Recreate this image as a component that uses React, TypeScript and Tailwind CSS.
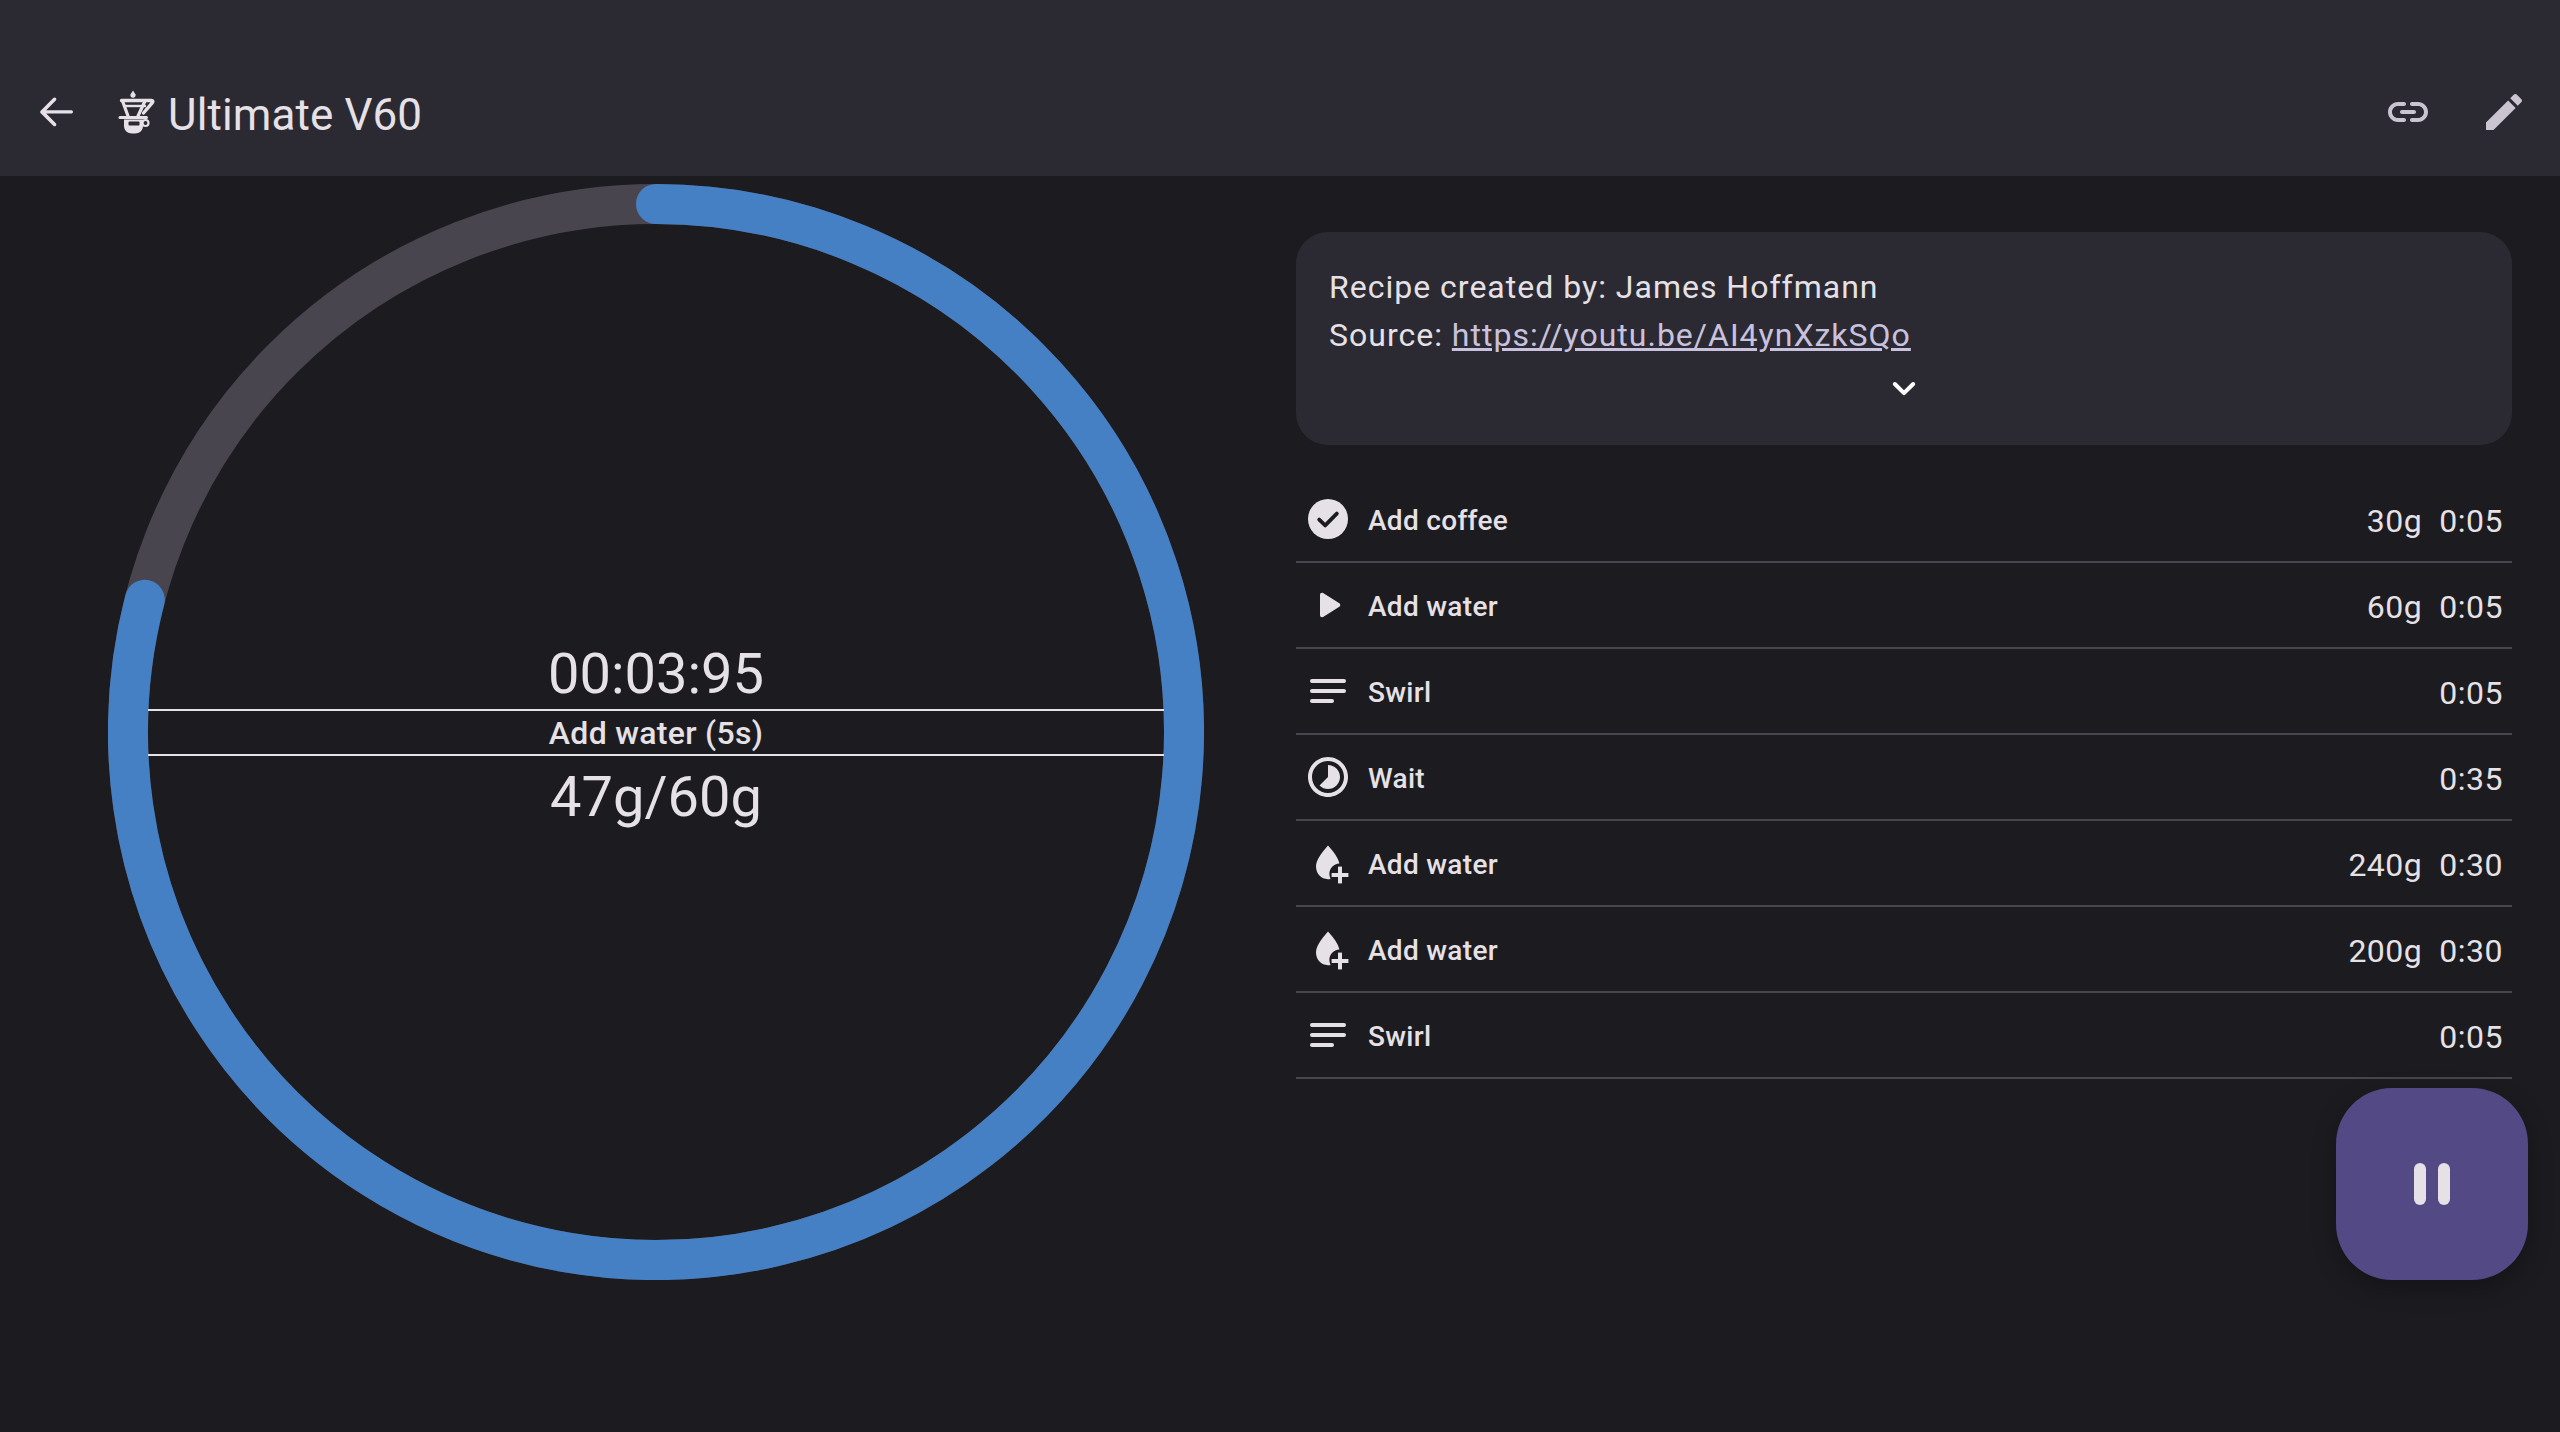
const TXT = "#e6e1e6";
const font = { fontFamily: "Roboto, sans-serif" };

function I({ d, size = 48, color = TXT }: { d: string; size?: number; color?: string }) {
  return (
    <svg width={size} height={size} viewBox="0 0 24 24" fill={color} className="shrink-0">
      <path d={d} />
    </svg>
  );
}

const back = "M19.6 11.1H7.1l4.8-4.8c.35-.35.35-.92 0-1.27-.35-.35-.9-.35-1.25 0l-6.3 6.3c-.35.35-.35.92 0 1.27l6.3 6.3c.35.35.9.35 1.25 0 .35-.35.35-.92 0-1.27l-4.8-4.83h12.5c.5 0 .9-.4.9-.9s-.4-.8-.9-.8z";
const link = "M17 7h-3c-.55 0-1 .45-1 1s.45 1 1 1h3c1.65 0 3 1.35 3 3s-1.35 3-3 3h-3c-.55 0-1 .45-1 1s.45 1 1 1h3c2.76 0 5-2.24 5-5s-2.24-5-5-5zm-9 5c0 .55.45 1 1 1h6c.55 0 1-.45 1-1s-.45-1-1-1H9c-.55 0-1 .45-1 1zm2 3H7c-1.65 0-3-1.35-3-3s1.35-3 3-3h3c.55 0 1-.45 1-1s-.45-1-1-1H7c-2.76 0-5 2.24-5 5s2.24 5 5 5h3c.55 0 1-.45 1-1s-.45-1-1-1z";
const edit = "M3 17.25V21h3.75L17.81 9.94l-3.75-3.75L3 17.25zM20.71 7.04c.39-.39.39-1.02 0-1.41l-2.34-2.34c-.39-.39-1.02-.39-1.41 0l-1.83 1.83 3.75 3.75 1.83-1.83z";
const chevron = "M15.88 9.29 12 13.17 8.12 9.29c-.39-.39-1.02-.39-1.41 0-.39.39-.39 1.02 0 1.41l4.59 4.59c.39.39 1.02.39 1.41 0l4.59-4.59c.39-.39.39-1.02 0-1.41-.39-.38-1.03-.39-1.42 0z";
const play = "M8 6.82v10.36c0 .79.87 1.27 1.54.84l8.14-5.18c.62-.39.62-1.29 0-1.69L9.54 5.98C8.87 5.55 8 6.03 8 6.82z";
const timelapse = "M16.24 7.76C15.07 6.59 13.54 6 12 6v6l-4.24 4.24c2.34 2.34 6.14 2.34 8.49 0 2.34-2.34 2.34-6.14-.01-8.48zM12 2C6.48 2 2 6.48 2 12s4.48 10 10 10 10-4.48 10-10S17.52 2 12 2zm0 18c-4.42 0-8-3.58-8-8s3.58-8 8-8 8 3.58 8 8-3.58 8-8 8z";

function Check() {
  return (
    <svg width={48} height={48} viewBox="0 0 24 24" className="shrink-0">
      <circle cx="12" cy="12" r="10" fill={TXT} />
      <path d="M7.6 12.3l3 2.9 5.8-5.9" fill="none" stroke="#1c1b1f" strokeWidth="1.9" strokeLinecap="round" strokeLinejoin="round" />
    </svg>
  );
}

function Notes() {
  return (
    <svg width={48} height={48} viewBox="0 0 24 24" fill={TXT} className="shrink-0">
      <rect x="3" y="6" width="18" height="2" rx="1" />
      <rect x="3" y="11" width="18" height="2" rx="1" />
      <rect x="3" y="16" width="12" height="2" rx="1" />
    </svg>
  );
}

function WaterPlus() {
  return (
    <svg width={48} height={48} viewBox="0 0 24 24" fill={TXT} className="shrink-0">
      <path d="M12 3.3C15 6.6 17 9.4 17.7 12.2C14.8 12.4 12.7 14.6 12.7 17.3C12.7 18.2 12.9 19.2 13.3 20C12.9 20.05 12.4 20.1 12 20.1C8.6 20.1 6 17.4 6 13.8C6 10.8 8.5 7.2 12 3.3Z" />
      <rect x="13.8" y="17" width="8.4" height="2" />
      <rect x="17" y="13.8" width="2" height="8.4" />
    </svg>
  );
}

function Dripper() {
  return (
    <svg width={38} height={44} viewBox="0 0 38 44" fill="none" className="shrink-0">
      <path d="M15 0.5L12.6 4.2A2.6 2.6 0 1 0 17.4 4.2Z" fill={TXT} />
      <path d="M3.5 10.5H33.5C35 10.5 35.2 11.8 34.4 12.6L25.5 23" stroke={TXT} strokeWidth="3.4" strokeLinecap="round" strokeLinejoin="round" />
      <path d="M4.5 11L10 26M27 11L20 26" stroke={TXT} strokeWidth="3.2" strokeLinecap="round" />
      <path d="M7 16H28" stroke={TXT} strokeWidth="2.4" />
      <path d="M2 27.5H28.5" stroke={TXT} strokeWidth="3" strokeLinecap="round" />
      <path d="M6 29.5H25V36C25 40.5 21.5 43.5 17 43.5H14C9.5 43.5 6 40.5 6 36Z" fill={TXT} />
      <rect x="10.5" y="31.5" width="11" height="4" rx="1" fill="#2b2a33" />
      <circle cx="27.5" cy="33" r="3" stroke={TXT} strokeWidth="2.2" />
    </svg>
  );
}

const rows = [
  { icon: <Check />, label: "Add coffee", g: "30g", t: "0:05" },
  { icon: <I d={play} />, label: "Add water", g: "60g", t: "0:05" },
  { icon: <Notes />, label: "Swirl", g: "", t: "0:05" },
  { icon: <I d={timelapse} />, label: "Wait", g: "", t: "0:35" },
  { icon: <WaterPlus />, label: "Add water", g: "240g", t: "0:30" },
  { icon: <WaterPlus />, label: "Add water", g: "200g", t: "0:30" },
  { icon: <Notes />, label: "Swirl", g: "", t: "0:05" },
];

export default function App() {
  return (
    <div className="relative flex h-[1432px] w-[2560px] flex-col overflow-hidden bg-[#1c1b1f] text-[#e6e1e6]" style={font}>
      <header className="flex h-[176px] shrink-0 items-center bg-[#2b2a33] pl-[32px] pr-[32px] pt-[48px]">
        <I d={back} />
        <div className="ml-[38px] flex items-center gap-[12px]">
          <Dripper />
          <span className="mt-[6px] text-[44px] leading-[56px] tracking-[0.1px]">Ultimate V60</span>
        </div>
        <div className="ml-auto flex items-center gap-[48px]">
          <I d={link} color="#cac4d0" />
          <I d={edit} color="#cac4d0" />
        </div>
      </header>

      <main className="flex min-h-0 flex-1">
        <section className="w-[1296px] shrink-0 pl-[108px] pt-[8px]">
          <div className="relative flex h-[1096px] w-[1096px] flex-col items-center justify-start">
            <svg width={1096} height={1096} viewBox="0 0 1096 1096" fill="none" className="absolute inset-0">
              <circle cx="548" cy="548" r="528" stroke="#49454f" strokeWidth="40" />
              <path d="M548 20A528 528 0 1 1 36.8 415.8" stroke="#4680c4" strokeWidth="40" strokeLinecap="round" />
            </svg>
            <div className="relative mt-[456px] text-center text-[56px] leading-[69px]">00:03:95</div>
            <div className="relative flex h-[47px] w-[1016px] items-center justify-center border-y-2 border-[#e6e1e6] text-[32px] font-medium leading-[44px] tracking-[0.3px]">
              Add water (5s)
            </div>
            <div className="relative text-center text-[56px] leading-[82px]">47g/60g</div>
          </div>
        </section>

        <section className="flex w-[1216px] shrink-0 flex-col pt-[56px]">
          <div className="flex h-[213px] flex-col rounded-[32px] bg-[#2b2a33] px-[33px] pt-[31px] text-[32px] leading-[48px] tracking-[1px]">
            <div>Recipe created by: James Hoffmann</div>
            <div>
              Source: <span className="text-[#c9c2de] underline">https://youtu.be/AI4ynXzkSQo</span>
            </div>
            <div className="mt-[5px] flex justify-center">
              <I d={chevron} color="#ffffff" />
            </div>
          </div>
          <div className="mt-[32px] flex flex-col">
            {rows.map((r, i) => (
              <div key={i} className="flex h-[86px] items-center border-b-2 border-[#49454f] pl-[8px] pr-[9px]">
                <div className="flex w-[64px] shrink-0">{r.icon}</div>
                <span className="pt-[3px] text-[28px] font-medium tracking-[0.3px]">{r.label}</span>
                <div className="ml-auto flex gap-[17px] pt-[3px] text-[32px] tracking-[0.5px]">
                  {r.g && <span>{r.g}</span>}
                  <span>{r.t}</span>
                </div>
              </div>
            ))}
          </div>
        </section>
      </main>

      <button className="absolute bottom-[152px] right-[32px] flex h-[192px] w-[192px] items-center justify-center gap-[12px] rounded-[56px] bg-[#534a85] shadow-[0_8px_24px_rgba(0,0,0,0.3)]">
        <span className="h-[42px] w-[12px] rounded-full bg-[#e6e1e6]" />
        <span className="h-[42px] w-[12px] rounded-full bg-[#e6e1e6]" />
      </button>
    </div>
  );
}
